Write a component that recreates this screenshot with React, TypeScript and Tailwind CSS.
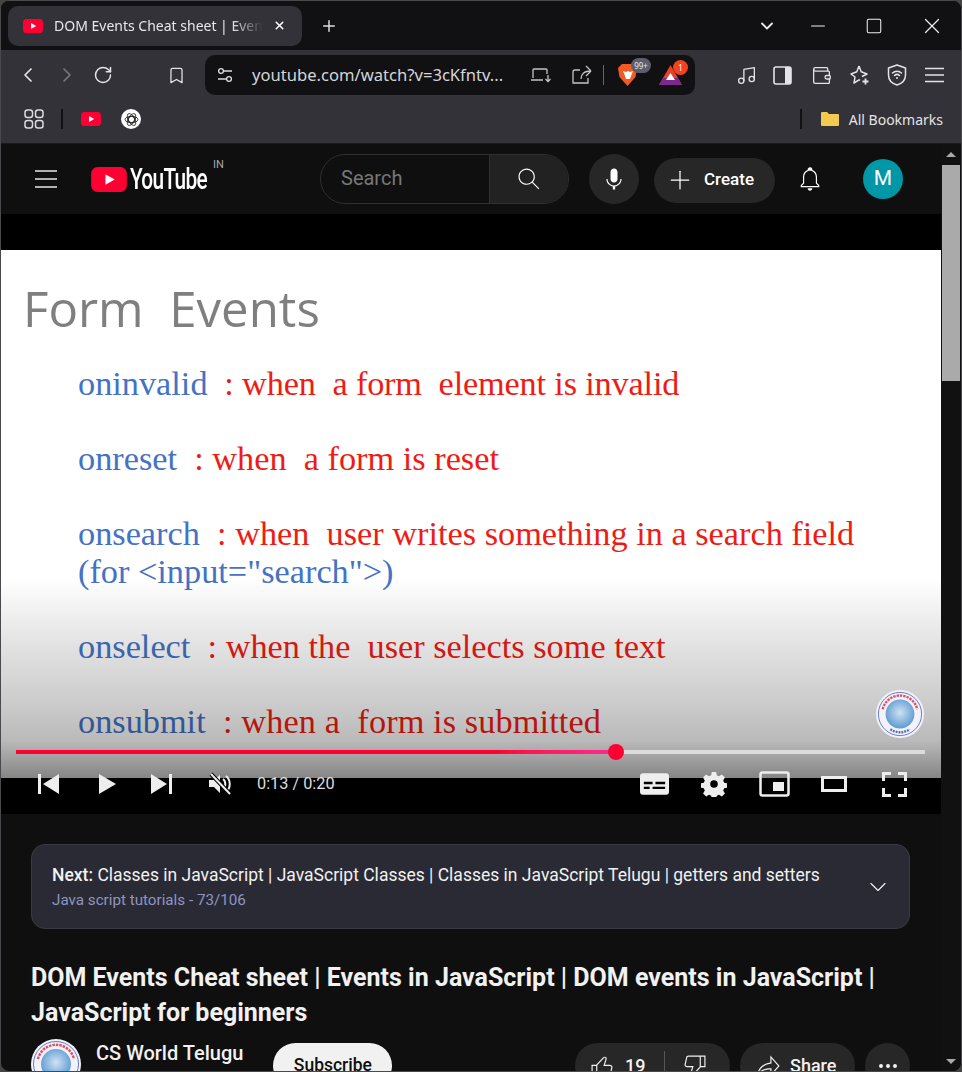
import { ChevronDown, ChevronLeft, ChevronRight, Minus, MoreHorizontal, Music, Plus, RotateCw, Square, X, Bookmark, Wallet } from 'lucide-react'

const chrome = { fontFamily: '"Noto Sans", sans-serif' }
const yt = { fontFamily: 'Roboto, sans-serif' }

// youtube's own outlined icons, 24 box
const icons = {
  search: 'M20.87,20.17l-5.59-5.59C16.35,13.35,17,11.75,17,10c0-3.87-3.13-7-7-7s-7,3.13-7,7s3.13,7,7,7c1.75,0,3.35-0.65,4.58-1.71 l5.59,5.59L20.87,20.17z M10,16c-3.31,0-6-2.69-6-6s2.69-6,6-6s6,2.69,6,6S13.31,16,10,16z',
  mic: 'M12 3C10.34 3 9 4.37 9 6.07V11.93C9 13.63 10.34 15 12 15C13.66 15 15 13.63 15 11.93V6.07C15 4.37 13.66 3 12 3ZM18.5 12H17.5C17.5 15.03 15.03 17.5 12 17.5C8.97 17.5 6.5 15.03 6.5 12H5.5C5.5 15.24 7.89 17.93 11 18.41V21H13V18.41C16.11 17.93 18.5 15.24 18.5 12Z',
  bell: 'M10 20h4c0 1.1-.9 2-2 2s-2-.9-2-2zm10-2.65V19H4v-1.65l2-1.88v-5.15C6 7.4 7.56 5.1 10 4.34v-.38c0-1.42 1.49-2.5 2.99-1.76.65.32 1.01 1.03 1.01 1.76v.39c2.44.75 4 3.06 4 5.98v5.15l2 1.87zm-1 .42-2-1.88v-5.47c0-2.47-1.19-4.36-3.13-5.1-1.26-.53-2.64-.5-3.84.03C8.15 6.11 7 7.99 7 10.42v5.47l-2 1.88V18h14v-.23z',
  like: 'M18.77,11h-4.23l1.52-4.94C16.38,5.03,15.54,4,14.38,4c-0.58,0-1.14,0.24-1.52,0.65L7,11H3v10h4h1h9.43 c1.06,0,1.98-0.67,2.19-1.61l1.34-6C21.23,12.15,20.18,11,18.77,11z M7,20H4v-8h3V20z M19.98,13.17l-1.34,6 C18.54,19.65,18.03,20,17.43,20H8v-8.61l5.6-6.06C13.79,5.12,14.08,5,14.38,5c0.26,0,0.5,0.11,0.63,0.3 c0.07,0.1,0.15,0.26,0.09,0.47l-1.52,4.94L13.18,12h1.35h4.23c0.41,0,0.8,0.17,1.03,0.46C19.92,12.61,20.05,12.86,19.98,13.17z',
  share: 'M15 5.63 20.66 12 15 18.37V14h-1c-3.96 0-7.14 1-9.75 3.09 1.84-4.07 5.11-6.4 9.89-7.1l.86-.13V5.63M14 3v6C6.22 10.13 3.11 15.33 2 21c2.78-3.97 6.44-6 12-6v6l8-9-8-9z',
}

function Glyph({ d, size = 24, className = '' }: { d: string; size?: number; className?: string }) {
  return (
    <svg width={size} height={size} viewBox="0 0 24 24" fill="currentColor" className={`shrink-0 ${className}`}>
      <path d={d} />
    </svg>
  )
}

function YtIcon({ w = 20, h = 14 }: { w?: number; h?: number }) {
  return (
    <svg width={w} height={h} viewBox="0 0 20 14" className="shrink-0">
      <rect width="20" height="14" rx="3.6" fill="#ff0033" />
      <path d="M8 4v6l5.2-3z" fill="#fff" />
    </svg>
  )
}

function Globe({ size }: { size: number }) {
  return (
    <svg width={size} height={size} viewBox="0 0 50 50" className="shrink-0">
      <defs>
        <radialGradient id="globeFill" cx="50%" cy="45%" r="55%">
          <stop offset="0%" stopColor="#cfe2f3" />
          <stop offset="100%" stopColor="#5f9bd2" />
        </radialGradient>
      </defs>
      <circle cx="25" cy="25" r="25" fill="#f2f3f8" />
      <circle cx="25" cy="25" r="22.500" fill="none" stroke="#6a78c8" strokeWidth="1" />
      <path d="M7 20a18.500 18.500 0 0 1 36 0" fill="none" stroke="#e0526a" strokeWidth="2.500" strokeDasharray="2.500 1" />
      <path d="M15 41a18 18 0 0 0 20 0" fill="none" stroke="#5a6bc0" strokeWidth="2.500" strokeDasharray="2 1" />
      <circle cx="25" cy="25" r="15" fill="url(#globeFill)" />
    </svg>
  )
}

function SlideLine({ on, rest, className, restClass = '' }: { on: string; rest: string; className: string; restClass?: string }) {
  return (
    <div className={`whitespace-pre leading-[38px] ${className}`}>
      <span className="text-[#4472c4]">{on}</span>
      <span className={`text-[#ee1c14] ${restClass}`}>{rest}</span>
    </div>
  )
}

function TabBar() {
  return (
    <div className="h-[49px] bg-[#111113] flex items-center pl-[7px] shrink-0">
      <div className="w-[294px] h-[40px] rounded-[10px] bg-[#323238] flex items-center pl-[15px] pr-[8px]">
        <YtIcon />
        <span className="ml-[11px] w-[209px] overflow-hidden whitespace-nowrap text-[14px] text-[#e8e8ea] [mask-image:linear-gradient(to_right,black_85%,transparent)]">
          DOM Events Cheat sheet | Events in JavaScript
        </span>
        <X size={13} strokeWidth={3} className="ml-[10px] text-white shrink-0" />
      </div>
      <Plus size={18} strokeWidth={2} className="ml-[18px] text-[#ddd]" />
      <ChevronDown size={20} strokeWidth={2.2} className="ml-[419px] text-[#e8e8e8]" />
      <Minus size={22} strokeWidth={1.100} className="ml-[30px] text-[#f0f0f0]" />
      <Square size={18} strokeWidth={1.400} className="ml-[36px] text-[#f0f0f0]" />
      <X size={26} strokeWidth={1.100} className="ml-[36px] text-[#f0f0f0]" />
    </div>
  )
}

function Toolbar() {
  return (
    <div className="h-[50px] bg-[#323238] flex items-center shrink-0 text-[#e4e4e6]">
      <ChevronLeft size={24} strokeWidth={1.7} className="ml-[15px]" />
      <ChevronRight size={24} strokeWidth={1.7} className="ml-[15px] text-[#77777c]" />
      <RotateCw size={20} strokeWidth={1.8} className="ml-[14px]" />
      <Bookmark size={19} strokeWidth={1.6} className="ml-[54px]" />
      <div className="ml-[19px] w-[490px] h-[40px] rounded-[10px] bg-[#111113] flex items-center pl-[12px]">
        <svg width="16" height="16" viewBox="0 0 16 16" fill="none" stroke="#ddd" strokeWidth="1.3" className="shrink-0">
          <circle cx="4" cy="4" r="2.4" />
          <path d="M7 4h8M1 12h8" />
          <circle cx="12" cy="12" r="2.4" />
        </svg>
        <span className="ml-[19px] w-[258px] text-[16.600px] text-[#d5d5d8] whitespace-nowrap">youtube.com/watch?v=3cKfntv...</span>
        <svg width="22" height="16" viewBox="0 0 22 16" fill="none" stroke="#c4c4c8" strokeWidth="1.3" className="ml-[20px] shrink-0">
          <path d="M3 11V3a1 1 0 0 1 1-1h12a1 1 0 0 1 1 1v4M1 13h12M18 8v6M15.500 12l2.500 2.500 2.500-2.500" />
        </svg>
        <svg width="20" height="20" viewBox="0 0 20 20" fill="none" stroke="#c4c4c8" strokeWidth="1.3" className="ml-[20px] shrink-0">
          <path d="M8 5H3a2 2 0 0 0-2 2v11h15v-5M19 6l-5-5M19 6l-5 5M19 6c-7 0-10 3-10 8" />
        </svg>
        <div className="ml-[11px] w-px h-[20px] bg-[#66666a]" />
        <div className="relative ml-[14px] w-[20px] h-[24px]">
          <svg width="20" height="24" viewBox="0 0 20 24">
            <path d="M4 1h12l3 4-1.500 9-8 9-8-9L0 5z" fill="#f25a22" />
            <path d="M5 8l3 1 2-1 2 1 3-1-2 5-1 3h-4l-1-3z" fill="#fff" />
          </svg>
          <span className="absolute left-[13px] top-[-5px] w-[20px] h-[15px] rounded-full bg-[#5c5f6b] text-[8px] leading-[15px] text-center text-[#e8e8e8]">99+</span>
        </div>
        <div className="relative ml-[21px] w-[23px] h-[20px]">
          <svg width="23" height="20" viewBox="0 0 23 20">
            <path d="M11.500 0L23 20H0z" fill="#e8402a" />
            <path d="M0 20l4-7h15l4 7z" fill="#7a2a8c" />
            <path d="M11.500 8l4.500 7H7z" fill="#fff" />
          </svg>
          <span className="absolute left-[14px] top-[-5px] w-[15px] h-[15px] rounded-full bg-[#f2431f] text-[8px] leading-[15px] text-center text-white">1</span>
        </div>
      </div>
      <Music size={21} strokeWidth={1.5} className="ml-[41px]" />
      <svg width="19" height="19" viewBox="0 0 19 19" className="ml-[16px] shrink-0">
        <rect x="1" y="1" width="17" height="17" rx="2" fill="none" stroke="#e4e4e6" strokeWidth="1.6" />
        <rect x="12" y="1" width="6" height="17" fill="#e4e4e6" />
      </svg>
      <Wallet size={21} strokeWidth={1.5} className="ml-[19px]" />
      <svg width="22" height="22" viewBox="0 0 22 22" fill="none" stroke="#e4e4e6" strokeWidth="1.500" className="ml-[17px] shrink-0">
        <path d="M10 2l2.200 5.800L18 10l-5 2.500M10 2L7.800 7.800 2 10l4 3-1 6 5-3.200 1 .6" strokeLinejoin="round" />
        <path d="M16.500 14.500v6M13.500 17.500h6" strokeWidth="1.800" />
      </svg>
      <svg width="20" height="22" viewBox="0 0 20 22" fill="none" stroke="#e4e4e6" strokeWidth="1.500" className="ml-[16px] shrink-0">
        <path d="M10 1l8.500 3v7c0 5-3.500 8.500-8.500 10-5-1.500-8.500-5-8.500-10V4z" strokeLinejoin="round" />
        <path d="M5.500 9c2.500-2.400 6.500-2.400 9 0M7.500 11.500c1.400-1.300 3.600-1.300 5 0" strokeLinecap="round" />
        <circle cx="10" cy="14" r="1" fill="#e4e4e6" stroke="none" />
      </svg>
      <svg width="19" height="16" viewBox="0 0 19 16" fill="none" stroke="#e4e4e6" strokeWidth="1.500" className="ml-[18px] shrink-0">
        <path d="M0 1.500h19M0 8h19M0 14.500h19" />
      </svg>
    </div>
  )
}

function BookmarkBar() {
  return (
    <div className="h-[44px] pb-[5px] bg-[#323238] flex items-center shrink-0 border-b border-[#1c1c1f]">
      <svg width="20" height="20" viewBox="0 0 20 20" fill="none" stroke="#dcdcde" strokeWidth="1.5" className="ml-[23px] shrink-0">
        <rect x="1" y="1" width="7.500" height="7.500" rx="2.500" />
        <rect x="11.500" y="1" width="7.500" height="7.500" rx="2.500" />
        <rect x="1" y="11.500" width="7.500" height="7.500" rx="2.500" />
        <rect x="11.500" y="11.500" width="7.500" height="7.500" rx="2.500" />
      </svg>
      <div className="ml-[17px] w-[2px] h-[20px] bg-[#111113]" />
      <div className="ml-[18px]"><YtIcon /></div>
      <div className="ml-[20px] w-[20px] h-[20px] rounded-full bg-white flex items-center justify-center">
        <svg width="15" height="15" viewBox="0 0 14 14" fill="none" stroke="#222" strokeWidth="0.900">
          <circle cx="7" cy="7" r="3" />
          <ellipse cx="7" cy="7" rx="6" ry="3" />
          <ellipse cx="7" cy="7" rx="6" ry="3" transform="rotate(60 7 7)" />
          <ellipse cx="7" cy="7" rx="6" ry="3" transform="rotate(-60 7 7)" />
        </svg>
      </div>
      <div className="ml-auto w-[2px] h-[20px] bg-[#111113]" />
      <svg width="20" height="16" viewBox="0 0 20 16" className="ml-[18px] shrink-0">
        <path d="M1 2a1 1 0 0 1 1-1h5l2 2h9a1 1 0 0 1 1 1v10a1 1 0 0 1-1 1H2a1 1 0 0 1-1-1z" fill="#f3c94f" />
      </svg>
      <span className="ml-[9px] mr-[18px] text-[14px] text-[#e4e4e6] whitespace-nowrap">All Bookmarks</span>
    </div>
  )
}

function Masthead() {
  return (
    <div className="h-[70px] flex items-center shrink-0 bg-[#0f0f0f] text-white" style={yt}>
      <svg width="22" height="18" viewBox="0 0 22 18" stroke="#e8e8e8" strokeWidth="1.300" className="ml-[34px] shrink-0">
        <path d="M0 1h22M0 9h22M0 17h22" />
      </svg>
      <div className="ml-[34px] flex items-center relative">
        <YtIcon w={36} h={25} />
        <span className="ml-[3px] w-[76px] text-[29px] font-medium leading-none tracking-[-1px] origin-left scale-x-[0.72] whitespace-nowrap">YouTube</span>
        <span className="absolute left-[122px] top-[-8px] text-[11px] text-[#aaa]">IN</span>
      </div>
      <div className="ml-[114px] w-[249px] h-[50px] rounded-full border border-[#303030] flex overflow-hidden">
        <div className="flex-1 pl-[20px] text-[20px] leading-[46px] text-[#777]">Search</div>
        <div className="w-[79px] bg-[#222] border-l border-[#303030] flex items-center justify-center">
          <Glyph d={icons.search} size={28} />
        </div>
      </div>
      <div className="ml-[20px] w-[50px] h-[50px] rounded-full bg-[#272727] flex items-center justify-center">
        <Glyph d={icons.mic} size={28} />
      </div>
      <div className="ml-[15px] w-[121px] h-[45px] rounded-full bg-[#272727] flex items-center pl-[11px] mt-[2px]">
        <Plus size={30} strokeWidth={1} />
        <span className="ml-[9px] text-[17px] font-medium">Create</span>
      </div>
      <Glyph d={icons.bell} size={28} className="ml-[21px]" />
      <div className="ml-[39px] w-[40px] h-[40px] rounded-full bg-[#0097a7] text-[21px] flex items-center justify-center">M</div>
    </div>
  )
}

function Player() {
  return (
    <div className="relative h-[600px] bg-black shrink-0">
      <div className="absolute top-[36px] inset-x-0 h-[528px] bg-white pl-[77px] text-[34.300px]" style={{ fontFamily: '"Liberation Serif", serif' }}>
        <div className="-ml-[55px] pt-[26px] h-[114px] text-[49.200px] leading-[64px] text-[#7f7f7f] whitespace-pre" style={{ fontFamily: '"Open Sans", sans-serif' }}>
          Form  Events
        </div>
        <SlideLine on="oninvalid" rest="  : when  a form  element is invalid" className="h-[75px]" restClass="tracking-[-0.18px]" />
        <SlideLine on="onreset" rest="  : when  a form is reset" className="h-[75px]" />
        <SlideLine on="onsearch" rest="  : when  user writes something in a search field" className="" />
        <div className="h-[75px] leading-[38px] text-[#4472c4]">{'(for <input="search">)'}</div>
        <SlideLine on="onselect" rest="  : when the  user selects some text" className="h-[75px]" />
        <SlideLine on="onsubmit" rest="  : when a  form is submitted" className="" restClass="tracking-[0.1px]" />
        <div className="absolute inset-x-0 bottom-0 h-[200px] bg-[linear-gradient(to_bottom,rgba(0,0,0,0)_0%,rgba(0,0,0,0.12)_36%,rgba(0,0,0,0.2)_62%,rgba(0,0,0,0.27)_81%,rgba(0,0,0,0.48)_100%)]" />
        <div className="absolute right-[17px] bottom-[40px]"><Globe size={48} /></div>
      </div>

      <div className="absolute left-[15px] w-[909px] bottom-[60px] h-[4px] bg-[#dcdcdc]">
        <div className="h-full w-[600px] bg-gradient-to-r from-[#ff0033] from-80% to-[#ff2791]" />
        <div className="absolute left-[592px] top-[-6px] w-[16px] h-[16px] rounded-full bg-[#ff0033]" />
      </div>

      <div className="absolute inset-x-0 bottom-[12px] h-[36px] flex items-center text-[#eee]" style={yt}>
        <svg width="22" height="20" viewBox="0 0 22 20" fill="#eee" className="ml-[37px]">
          <path d="M0 0h3v20H0zM21 0v20L5 10z" />
        </svg>
        <svg width="18" height="20" viewBox="0 0 18 20" fill="#eee" className="ml-[38px]">
          <path d="M1 0l17 10L1 20z" />
        </svg>
        <svg width="22" height="20" viewBox="0 0 22 20" fill="#eee" className="ml-[34px]">
          <path d="M19 0h3v20h-3zM1 0v20l16-10z" />
        </svg>
        <svg width="24" height="24" viewBox="0 0 24 24" fill="#eee" className="ml-[36px]">
          <path d="M1 8v7h5l6 6V3L6 8z" />
          <path d="M15 7c3 2 3 8 0 10M18 4c5 4 5 12 0 16" fill="none" stroke="#eee" strokeWidth="2" />
          <path d="M3 2l19 20" stroke="#000" strokeWidth="4" />
          <path d="M3 2l19 20" stroke="#eee" strokeWidth="2" />
        </svg>
        <span className="ml-[25px] text-[16.300px] text-[#ddd]">0:13 / 0:20</span>
        <svg width="29" height="22" viewBox="0 0 30 22" className="ml-[305px]">
          <rect width="30" height="22" rx="3" fill="#eee" />
          <path d="M4 10h9M16 10h10M4 15h6M13 15h13" stroke="#000" strokeWidth="2.500" />
        </svg>
        <svg width="26" height="26" viewBox="0 0 24 24" fill="#eee" className="ml-[32px]">
          <path fillRule="evenodd" d="M10 1h4l.6 3 2 .9 2.700-1.600 2.800 2.800-1.600 2.700.9 2 3 .6v4l-3 .6-.9 2 1.600 2.700-2.800 2.800-2.700-1.600-2 .9-.6 3h-4l-.6-3-2-.9-2.700 1.600-2.800-2.800 1.600-2.700-.9-2-3-.6v-4l3-.6.9-2-1.600-2.700 2.800-2.800 2.700 1.600 2-.9zM12 8.500a3.500 3.500 0 1 0 0 7 3.500 3.500 0 0 0 0-7z" />
        </svg>
        <svg width="31" height="26" viewBox="0 0 31 26" className="ml-[32px]">
          <rect x="1.500" y="1.500" width="28" height="23" rx="2" fill="none" stroke="#eee" strokeWidth="2.500" />
          <rect x="14" y="11" width="11" height="9" fill="#eee" />
        </svg>
        <svg width="26" height="16" viewBox="0 0 26 16" className="ml-[31px]">
          <rect x="1.500" y="1.500" width="23" height="13" fill="none" stroke="#eee" strokeWidth="3" />
        </svg>
        <svg width="25" height="25" viewBox="0 0 25 25" fill="none" stroke="#eee" strokeWidth="3" className="ml-[35px]">
          <path d="M1.500 9V1.500H9M16 1.500h7.500V9M23.500 16v7.500H16M9 23.500H1.500V16" />
        </svg>
      </div>
    </div>
  )
}

function Watch() {
  return (
    <div className="pl-[30px] pr-[31px] pt-[30px] text-[#f1f1f1]" style={yt}>
      <div className="h-[85px] rounded-[14px] bg-[#2a2a34] border border-[#3a3a42] flex items-center pl-[20px] pr-[17px]">
        <div className="flex-1 whitespace-nowrap">
          <div className="text-[17.500px] leading-[24px]"><span className="font-medium">Next: </span>Classes in JavaScript | JavaScript Classes | Classes in JavaScript Telugu | getters and setters</div>
          <div className="text-[15.200px] leading-[22px] mt-[2px] text-[#8f94c2]">Java script tutorials - 73/106</div>
        </div>
        <ChevronDown size={28} strokeWidth={1} />
      </div>
      <h1 className="mt-[30px] pt-px text-[25px] font-bold leading-[35px] w-[870px]">
        DOM Events Cheat sheet | Events in JavaScript | DOM events in JavaScript | JavaScript for beginners
      </h1>
      <div className="mt-[9px] flex items-start">
        <Globe size={50} />
        <div className="ml-[15px] text-[20px] font-medium leading-[26px] mt-[1px] whitespace-nowrap">CS World Telugu</div>
        <div className="ml-[30px] mt-[4px] w-[119px] h-[45px] rounded-full bg-[#f1f1f1] text-[#0f0f0f] text-[17.500px] font-medium flex items-center justify-center">Subscribe</div>
        <div className="ml-auto mt-[4px] h-[45px] w-[155px] rounded-full bg-[#272727] flex items-center">
          <Glyph d={icons.like} size={28} className="ml-[13px]" />
          <span className="ml-[9px] text-[18px] font-medium">19</span>
          <div className="ml-[19px] w-px h-[30px] bg-[#555]" />
          <Glyph d={icons.like} size={28} className="ml-[16px] rotate-180" />
        </div>
        <div className="ml-[10px] mt-[4px] h-[45px] w-[115px] rounded-full bg-[#272727] flex items-center pl-[14px]">
          <Glyph d={icons.share} size={28} />
          <span className="ml-[8px] text-[18px] font-medium">Share</span>
        </div>
        <div className="ml-[10px] mt-[4px] h-[45px] w-[45px] rounded-full bg-[#272727] flex items-center justify-center">
          <MoreHorizontal size={24} strokeWidth={2} />
        </div>
      </div>
    </div>
  )
}

function Scrollbar() {
  return (
    <div className="w-[20px] shrink-0 bg-[#111] relative pl-[1px] pr-[1px]">
      <div className="h-[21px] flex items-center justify-center">
        <div className="w-0 h-0 border-x-[5px] border-x-transparent border-b-[5px] border-b-[#aaa]" />
      </div>
      <div className="h-[216px] bg-[#aaa]" />
      <div className="absolute bottom-[7px] left-[5px] w-0 h-0 border-x-[5px] border-x-transparent border-t-[5px] border-t-[#aaa]" />
    </div>
  )
}

export default function App() {
  return (
    <div className="w-[962px] h-[1072px] bg-[#444] overflow-hidden">
      <div className="w-[962px] h-[1072px] flex flex-col overflow-hidden rounded-[9px] border border-[#4a4a4e] bg-[#0f0f0f]" style={chrome}>
        <TabBar />
        <Toolbar />
        <BookmarkBar />
        <div className="flex-1 flex min-h-0">
          <main className="w-[940px] shrink-0 flex flex-col overflow-hidden">
            <Masthead />
            <Player />
            <Watch />
          </main>
          <Scrollbar />
        </div>
      </div>
    </div>
  )
}
